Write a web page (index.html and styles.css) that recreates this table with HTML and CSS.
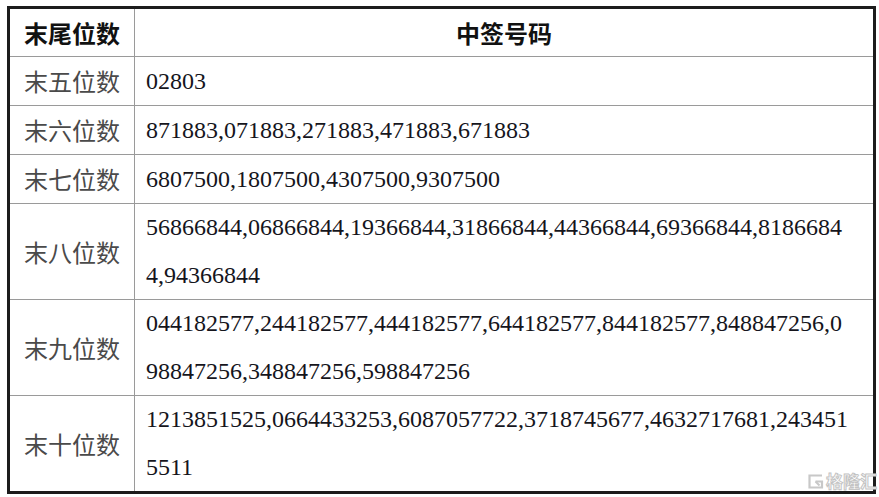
FILE: index.html
```html
<!DOCTYPE html>
<html lang="zh-CN">
<head>
<meta charset="utf-8">
<title>中签号码</title>
<link rel="stylesheet" href="styles.css">
</head>
<body>
<div class="page">
  <div class="table">
    <div class="cell label head">末尾位数</div>
    <div class="cell value head center">中签号码</div>

    <div class="cell label">末五位数</div>
    <div class="cell value">02803</div>

    <div class="cell label">末六位数</div>
    <div class="cell value">871883,071883,271883,471883,671883</div>

    <div class="cell label">末七位数</div>
    <div class="cell value">6807500,1807500,4307500,9307500</div>

    <div class="cell label double">末八位数</div>
    <div class="cell value double">56866844,06866844,19366844,31866844,44366844,69366844,81866844,94366844</div>

    <div class="cell label double">末九位数</div>
    <div class="cell value double">044182577,244182577,444182577,644182577,844182577,848847256,098847256,348847256,598847256</div>

    <div class="cell label double last">末十位数</div>
    <div class="cell value double last">1213851525,0664433253,6087057722,3718745677,4632717681,2434515511</div>
  </div>
  <div class="watermark">
    <svg class="wm-icon" width="17" height="17" viewBox="0 0 17 17" aria-hidden="true">
      <path d="M15 2.5H2.5v12H15V8.5H8.5" fill="none" stroke="#c8c8c8" stroke-width="2.2"/>
      <path d="M8.5 8.5l4 4" fill="none" stroke="#c8c8c8" stroke-width="2"/>
    </svg>
    <span class="wm-text">格隆汇</span>
  </div>
</div>
</body>
</html>
```

FILE: styles.css
```css
html, body {
  margin: 0;
  padding: 0;
  background: #ffffff;
}

.page {
  position: relative;
  width: 879px;
  height: 497px;
  padding: 6px 0 0 7px;
  box-sizing: border-box;
}

.table {
  width: 869px;
  box-sizing: border-box;
  border: 3px solid #1c1c1c;
  display: grid;
  grid-template-columns: 125px 1fr;
}

.cell {
  box-sizing: border-box;
  border-bottom: 1px solid #9a9a9a;
  height: 49px;
  line-height: 48px;
  font-size: 24px;
  white-space: normal;
}

.cell.head {
  height: 48px;
  line-height: 47px;
  font-family: "Noto Sans CJK SC", sans-serif;
  font-weight: 700;
  color: #111111;
}

.cell.double {
  height: 96px;
  line-height: 47.5px;
  display: flex;
  align-items: center;
}

.cell.last {
  border-bottom: none;
  height: 95px;
}

.label {
  border-right: 1px solid #9a9a9a;
  text-align: center;
  justify-content: center;
  font-family: "Noto Sans CJK SC", sans-serif;
  font-weight: 400;
  color: #4a4a4a;
}

.label.head {
  color: #111111;
}

.value {
  padding: 0 20px 0 11px;
  font-family: "Liberation Serif", "Times New Roman", serif;
  color: #15151c;
  word-break: break-all;
}

.value.center {
  text-align: center;
  padding: 0;
}

.watermark {
  position: absolute;
  left: 807px;
  top: 472px;
  display: flex;
  align-items: center;
  gap: 2px;
}

.wm-icon {
  display: block;
}

.wm-text {
  font-family: "Noto Sans CJK SC", sans-serif;
  font-size: 17px;
  line-height: 18px;
  font-weight: 700;
  color: #ffffff;
  -webkit-text-stroke: 1px #c4c4c4;
}
```
